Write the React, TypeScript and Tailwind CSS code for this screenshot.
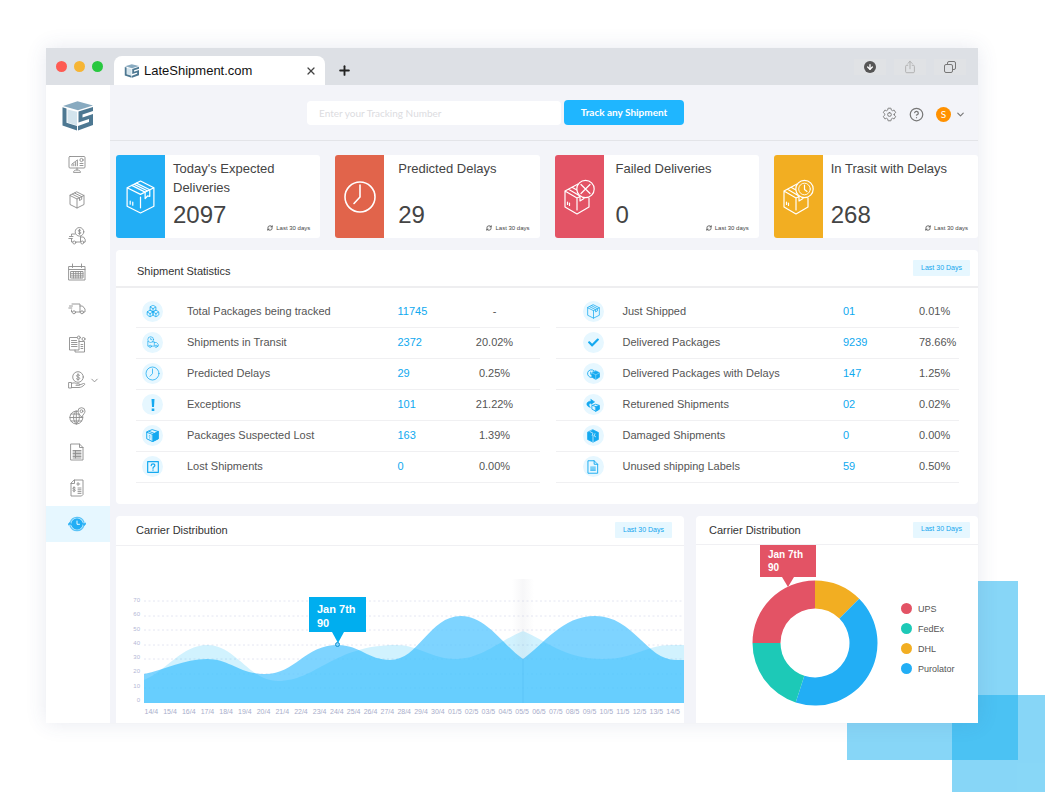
import React from "react";
import { ArrowDown, Boxes, ChevronDown, Plus, RefreshCw, X } from "lucide-react";
import { FaCheck } from "react-icons/fa";
import { FiHelpCircle } from "react-icons/fi";
import { IoSettingsOutline, IoShareOutline } from "react-icons/io5";

type IconProps = { children: React.ReactNode; className?: string };

/* Thin line icon on an 18px grid */
function LineIcon({ children, className = "size-[18px]" }: IconProps) {
  return (
    <svg
      viewBox="0 0 18 18"
      className={className}
      fill="none"
      stroke="currentColor"
      strokeWidth="0.9"
      strokeLinecap="round"
      strokeLinejoin="round"
      aria-hidden="true"
    >
      {children}
    </svg>
  );
}

function Logo({ className }: { className: string }) {
  return (
    <svg viewBox="0 0 32 30" className={className} aria-hidden="true">
      <path d="M1 5 15.500 .3 31 4.500 16 9.300Z" fill="#88aac0" />
      <path d="M5.500 8.500 15 10.800V24.500L5.500 21.500Z" fill="#d3e4ed" />
      <path d="M.5 6.300 4.500 7.500V21.800L15 25V29.600L.5 24.500Z" fill="#4d7892" />
      <path
        d="M31 6V10L20.500 13.500V16.500L31 13V24L16 29.600V25L27 21V18L16.500 21.500V10.600Z"
        fill="#4d7892"
      />
    </svg>
  );
}

const truck = (
  <>
    <path d="M4 5h8v8H7.500M4 13H3.500V11M12 7h2.500l2.500 3v3h-1.300M12.300 13H12M1.500 7h3M.8 9h3" />
    <circle cx="6" cy="13.300" r="1.500" />
    <circle cx="14" cy="13.300" r="1.500" />
  </>
);

const moneyTruck = (
  <>
    <circle cx="11.500" cy="4.800" r="4.300" />
    <path d="M12.800 3.400c-.6-.7-2.500-.6-2.500.4 0 1.200 2.600.8 2.600 2.100 0 1-2 1.200-2.700.3M11.500 2.200v5.200" />
    <path d="M7 7H3.500v1.500M3.500 12v3h1.200M8 15h4.500V9.500M13 10h2.500l1.700 2.500V15h-1M1.500 9.500h3.500M.8 11.500h3.500" />
    <circle cx="6.300" cy="15.500" r="1.500" />
    <circle cx="14.300" cy="15.500" r="1.500" />
  </>
);

const searchTruck = (
  <>
    <circle cx="6.500" cy="5" r="4" />
    <path d="M6.500 3v2h1.500M2.500 7.500V14H4M7.500 14h4V8H9M11.500 9h3l2.500 2.500V14h-1" />
    <circle cx="5.800" cy="14.300" r="1.600" />
    <circle cx="14" cy="14.300" r="1.600" />
  </>
);

const box = (
  <>
    <path d="M9 1 16 4.500V13.500L9 17 2 13.500V4.500ZM2 4.500 9 8 16 4.500M9 8V17" />
    <path d="M4.500 3.300 11.500 6.800V9.500L13.700 8.300V5.600L6.700 2.100" />
  </>
);

const clock = (
  <>
    <circle cx="9" cy="9" r="7.800" />
    <path d="M9 3.500V9L6 12.300" />
  </>
);

const navItems = [
  {
    label: "Dashboard",
    icon: (
      <>
        <rect x="1" y="1.500" width="16" height="11.500" rx="1" />
        <path d="M4 10.800V9.500M5.800 10.800V9M7.600 10.800V7.500M9.400 10.800V5.500M4 9 9.400 5M12 8.500h3M12 10.500h3M9 13v2M5.500 17c0-1.300 1.600-2 3.500-2s3.500.7 3.500 2z" />
        <circle cx="13.500" cy="5" r="1.600" />
      </>
    ),
  },
  { label: "Packages", icon: box },
  { label: "Refunds", icon: moneyTruck },
  {
    label: "Calendar",
    icon: (
      <>
        <path d="M1 3.500h16v13.500H1zM1 6.500h16M4.500 1v3.500M13.500 1v3.500" />
        <path d="M3 8.500h12v6.500H3zM3 10.700h12M3 12.900h12M5.400 8.500v6.500M7.800 8.500v6.500M10.200 8.500v6.500M12.600 8.500v6.500" />
      </>
    ),
  },
  { label: "Carriers", icon: truck },
  {
    label: "Contracts",
    icon: (
      <>
        <path d="M9 2.500H1.500v12.500H11V5M11 6.500h5.500V17H7v-2M3.500 5.500h5M3.500 7.500h5.500M3.500 9.500h5.500M3.500 11.500h5.500M13 9.500h1.800M13 11.500h1.800M13 13.500h1.800" />
        <circle cx="10.800" cy="2.500" r="1.500" />
        <circle cx="15.500" cy="4" r="1.500" />
      </>
    ),
  },
  {
    label: "Payments",
    expandable: true,
    icon: (
      <>
        <circle cx="10" cy="6" r="5.300" />
        <path d="M11.700 4.300c-.8-.9-3.200-.7-3.200.6 0 1.500 3.300.9 3.300 2.500 0 1.300-2.600 1.500-3.500.3M10 2.700v6.600" />
        <path d="M1 11.500h2.500v5.500H1zM3.500 12.500c2-1 3.500-.8 5 .3h2.500c1 0 1 1.500 0 1.500H8M11.500 14l4-1.500c1-.4 1.800.6.9 1.300C14.500 15.500 13 16.500 11 16.500H3.500" />
      </>
    ),
  },
  {
    label: "Tracking",
    icon: (
      <>
        <path d="M10 4.200A6.500 6.500 0 1 0 14.800 9.500" />
        <path d="M8.300 4C4.500 7 4.500 13.500 8.300 17M8.300 17C12 14 12 9 10.500 7M8.300 4V17M1.800 10.500h13M3 7h8M3 14h10.700" />
        <path d="M13.500 10C11 7 10 5.500 10 4.200a3.500 3.500 0 0 1 7 0C17 5.500 16 7 13.500 10z" />
        <circle cx="13.500" cy="4.200" r="1.400" />
      </>
    ),
  },
  {
    label: "Reports",
    icon: (
      <>
        <path d="M3 1h8.500L15 4.500V17H3zM11.500 1v3.500H15" />
        <path d="M5 7.500h8M5 9h8M5 10.500h8M5 12h8M5 13.500h8M5 15h8M7.500 7.500V15" />
      </>
    ),
  },
  {
    label: "Invoices",
    icon: (
      <>
        <path d="M6.500 1H15v14.500l-1.500 1.500H3V4.500zM6.500 1v3.500H3M10 3.500v3M8.800 5h3" />
        <path d="M7.300 8.800c-.7-.7-2.500-.5-2.500.5 0 1.200 2.600.7 2.600 2 0 1-2 1.200-2.700.3M6 7.800v5M10 9h3M10 10.800h3M10 12.600h3M10 14.400h3" />
      </>
    ),
  },
  {
    label: "Delivery times",
    active: true,
    icon: (
      <>
        <circle cx="9" cy="9" r="5.800" fill="#22aef5" stroke="none" />
        <path d="M9 6v3.300h2.500" stroke="#fff" />
        <path
          d="M2.200 7.500A7.200 7.200 0 0 1 15.800 7M2.200 11A7.200 7.200 0 0 0 15.800 10.500"
          strokeWidth="1.300"
          stroke="#5cc4f7"
        />
        <path d="M0 9.500 1.800 7.500 3.600 9.500ZM14.400 8.500 16.200 10.500 18 8.500Z" fill="#22aef5" />
      </>
    ),
  },
];

function Sidebar() {
  return (
    <nav className="w-16 shrink-0 bg-white">
      <div className="flex h-[61px] items-center justify-center">
        <Logo className="h-[30px] w-8" />
      </div>
      <ul>
        {navItems.map((item) => (
          <li key={item.label} className={item.active ? "bg-[#e6f7ff]" : ""}>
            <a
              href="#"
              aria-label={item.label}
              className={`grid h-9 grid-cols-[1fr_18px_1fr] items-center pr-[3px] ${
                item.active ? "text-[#22aef5]" : "text-[#8c8c8c]"
              }`}
            >
              <span />
              <LineIcon>{item.icon}</LineIcon>
              {item.expandable && <ChevronDown size={11} strokeWidth={2} className="ml-[3px]" />}
            </a>
          </li>
        ))}
      </ul>
    </nav>
  );
}

function BrowserBar() {
  return (
    <div className="flex h-[37px] items-end bg-[#dde0e5]">
      <div className="flex gap-[7px] self-center pl-[10px]">
        <span className="size-[11px] rounded-full bg-[#fe5b53]" />
        <span className="size-[11px] rounded-full bg-[#f6b535]" />
        <span className="size-[11px] rounded-full bg-[#28c840]" />
      </div>
      <div className="ml-[11px] flex h-[29px] w-[211px] items-center rounded-t-lg bg-white pl-[10px] pr-2">
        <Logo className="h-[14px] w-4" />
        <span className="ml-1 text-[13px] text-[#111]">LateShipment.com</span>
        <button aria-label="Close tab" className="ml-auto text-[#444]">
          <X size={12} strokeWidth={2.500} />
        </button>
      </div>
      <button aria-label="New tab" className="ml-3 self-center pt-2 text-[#222]">
        <Plus size={15} strokeWidth={3} />
      </button>
      <div className="ml-auto flex gap-2 self-center pr-3">
        <button aria-label="Downloads" className="flex h-4 w-8 items-center justify-center bg-[#e0e2e5]">
          <span className="flex size-3 items-center justify-center rounded-full bg-[#555] text-white">
            <ArrowDown size={8} strokeWidth={4} />
          </span>
        </button>
        <button aria-label="Share" className="flex h-4 w-8 items-center justify-center bg-[#e0e2e5] text-[#aaa]">
          <IoShareOutline size={14} />
        </button>
        <button aria-label="Show all tabs" className="flex h-4 w-8 items-center justify-center bg-[#e0e2e5] text-[#777]">
          <svg viewBox="0 0 12 12" className="size-3" fill="none" stroke="currentColor">
            <rect x="0.500" y="3.500" width="8" height="8" rx="1.500" />
            <path d="M3.500 3.500V2a1.500 1.500 0 0 1 1.500-1.500h5A1.500 1.500 0 0 1 11.500 2v5A1.500 1.500 0 0 1 10 8.500H8.500" />
          </svg>
        </button>
      </div>
    </div>
  );
}

function Header() {
  return (
    <header className="flex h-14 items-center justify-between border-b border-[#e3e4e8] pl-[197px] pr-3 font-[Lato,sans-serif]">
      <form className="flex items-center gap-[3px]">
        <input
          type="text"
          aria-label="Tracking number"
          placeholder="Enter your Tracking Number"
          className="h-6 w-[254px] rounded-sm bg-white px-3 text-[10px] text-gray-700 outline-none placeholder:text-[#dcdcdf]"
        />
        <button type="button" className="h-[25px] w-[120px] rounded-sm bg-[#1fb6ff] text-[10px] font-bold text-white">
          Track any Shipment
        </button>
      </form>
      <div className="flex items-center pt-1 text-[#777]">
        <button aria-label="Settings">
          <IoSettingsOutline size={15} />
        </button>
        <button aria-label="Help" className="ml-3">
          <FiHelpCircle size={15} />
        </button>
        <button aria-label="Account" className="ml-3 flex items-center gap-1">
          <span className="flex size-[15px] items-center justify-center rounded-full bg-[#ff9100] text-[10px] text-white">
            S
          </span>
          <ChevronDown size={11} strokeWidth={2.500} />
        </button>
      </div>
    </header>
  );
}

/* Package with a round badge over its top right corner */
function BadgedBox({ children, fill }: { children: React.ReactNode; fill: string }) {
  return (
    <svg
      viewBox="0 0 31 36"
      className="h-9 w-[31px]"
      fill="none"
      stroke="currentColor"
      strokeWidth="1.200"
      strokeLinecap="round"
      strokeLinejoin="round"
    >
      <path d="M13 19 1 12V28L13 35 25 28V19M13 19V31M13 19 25 13M1 12 14 5M4.500 10.200 16 17M8 8.200 20 15M16 17V22L20 19.500" />
      <path d="M3.500 23v2.500M5.500 24v2.500" />
      <circle cx="21.500" cy="10" r="8.700" fill={fill} />
      {children}
    </svg>
  );
}

const summaryCards = [
  {
    title: "Today's Expected Deliveries",
    value: "2097",
    color: "bg-[#22aef5]",
    pad: "pl-2",
    icon: (
      <svg
        viewBox="0 0 28 33"
        className="h-[34px] w-[29px]"
        fill="none"
        stroke="currentColor"
        strokeWidth="1.200"
        strokeLinejoin="round"
        strokeLinecap="round"
      >
        <path d="M14 1 27 7.500V25.500L14 32 1 25.500V7.500ZM1 7.500 14 14 27 7.500M14 16.500V27" />
        <path d="M5.500 5.200 18.500 11.800V18L20.800 15.500 23 16V9.500L10 3M8 4.200 20.500 10.500M4 20.500v3M6.500 21.500v3" />
      </svg>
    ),
  },
  {
    title: "Predicted Delays",
    value: "29",
    color: "bg-[#e1644b]",
    pad: "pl-[14px]",
    icon: (
      <svg viewBox="0 0 32 32" className="size-8" fill="none" stroke="currentColor" strokeWidth="1.600" strokeLinecap="round">
        <circle cx="16" cy="16" r="15" />
        <path d="M16 4V16L10 22.500" />
      </svg>
    ),
  },
  {
    title: "Failed Deliveries",
    value: "0",
    color: "bg-[#e35365]",
    pad: "pl-3",
    icon: (
      <BadgedBox fill="#e35365">
        <path d="M17 5.500 26 14.500M26 5.500 17 14.500" />
      </BadgedBox>
    ),
  },
  {
    title: "In Trasit with Delays",
    value: "268",
    color: "bg-[#f2ae22]",
    pad: "pl-2",
    icon: (
      <BadgedBox fill="#f2ae22">
        <circle cx="21.500" cy="10" r="5.800" strokeWidth="0.900" />
        <path d="M21.500 6V10.500L24 12.500" />
      </BadgedBox>
    ),
  },
];

function SummaryCards() {
  return (
    <section className="grid grid-cols-4 gap-[15px]">
      {summaryCards.map((card) => (
        <article key={card.title} className="flex overflow-hidden rounded-[3px] bg-white text-[#444]">
          <div className={`flex w-[49px] shrink-0 items-center justify-center text-white ${card.color}`}>
            {card.icon}
          </div>
          <div className={`flex-1 pb-[5px] pr-[10px] pt-1 ${card.pad}`}>
            <h2 className="h-[38px] text-[13px] leading-[19px]">{card.title}</h2>
            <div className="flex items-end justify-between">
              <p className="text-2xl leading-9">{card.value}</p>
              <p className="flex items-center gap-[3px] text-[6px] leading-[10px]">
                <RefreshCw size={6} strokeWidth={3} />
                Last 30 days
              </p>
            </div>
          </div>
        </article>
      ))}
    </section>
  );
}

function PeriodButton() {
  return (
    <button className="h-4 w-[57px] rounded-[1px] bg-[#e6f7ff] text-[7px] text-[#13a5ee]">Last 30 Days</button>
  );
}

const leftStats = [
  { label: "Total Packages being tracked", count: "11745", share: "-", icon: <Boxes size={14} strokeWidth={1.300} /> },
  { label: "Shipments in Transit", count: "2372", share: "20.02%", icon: <LineIcon className="size-[13px]">{searchTruck}</LineIcon> },
  { label: "Predicted Delays", count: "29", share: "0.25%", icon: <LineIcon className="size-[15px]">{clock}</LineIcon> },
  {
    label: "Exceptions",
    count: "101",
    share: "21.22%",
    icon: (
      <svg viewBox="0 0 4 12" className="h-3 w-1" fill="currentColor">
        <path d="M.5 0h3L3 8H1zM.7 9.500h2.600V12H.7z" />
      </svg>
    ),
  },
  {
    label: "Packages Suspected Lost",
    count: "163",
    share: "1.39%",
    icon: (
      <LineIcon className="size-[13px]">
        <path d="M9 1 17 3.500V13.500L9 17.500 1 13.500V4.500ZM1 4.500 9 7.500 17 3.500M4 3.200 12 6.300" strokeWidth="1.300" />
        <path d="M9 7.500 17 3.500V13.500L9 17.500Z" fill="currentColor" />
        <path d="M4 9.500c1-1.500 2.500-.2 1.300 1.200V12M5.200 13.500v.3" />
      </LineIcon>
    ),
  },
  {
    label: "Lost Shipments",
    count: "0",
    share: "0.00%",
    icon: (
      <LineIcon className="size-[12px]">
        <rect x="1" y="1" width="16" height="16" strokeWidth="1.800" />
        <path d="M6.300 6.800C6.500 3.500 11.800 3.600 11.700 6.800 11.600 8.800 9 8.800 9 11M9 13.500v.3" strokeWidth="1.900" />
      </LineIcon>
    ),
  },
];

const rightStats = [
  { label: "Just Shipped", count: "01", share: "0.01%", icon: <LineIcon className="size-[15px]">{box}</LineIcon> },
  { label: "Delivered Packages", count: "9239", share: "78.66%", icon: <FaCheck size={11} /> },
  {
    label: "Delivered Packages with Delays",
    count: "147",
    share: "1.25%",
    icon: (
      <LineIcon className="size-[14px]">
        <path d="M7 13.500A5 5 0 1 1 10 4.500M6 6.500v3h1.500" strokeWidth="1.100" />
        <path d="M12.500 5 17.500 7.500V13L12.500 16 7.500 13V7.500Z" fill="currentColor" />
        <path d="M7.500 7.500 12.500 10 17.500 7.500M12.500 10v6" stroke="#e6f7ff" strokeWidth="0.500" />
      </LineIcon>
    ),
  },
  {
    label: "Returened Shipments",
    count: "02",
    share: "0.02%",
    icon: (
      <LineIcon className="size-[14px]">
        <path d="M6.500 2 11 5 6.500 8V6.300C3.500 6.800 3 9.500 5.500 12-.5 10.500-.5 4.500 6.500 3.800Z" fill="currentColor" />
        <path d="M8 9.500 12.500 8 17 9.500V14.500L12.500 17 8 14.500ZM8 9.500 12.500 11" strokeWidth="1.100" />
        <path d="M12.500 11 17 9.500V14.500L12.500 17Z" fill="currentColor" />
      </LineIcon>
    ),
  },
  {
    label: "Damaged Shipments",
    count: "0",
    share: "0.00%",
    icon: (
      <LineIcon className="size-[14px]">
        <path d="M9 1 16 4.500V13.500L9 17 2 13.500V4.500Z" fill="currentColor" />
        <path d="M9 8v8.500M5.500 3.500 9 5.500 8 8M11.500 6 10.500 9 12.500 10" stroke="#e6f7ff" />
      </LineIcon>
    ),
  },
  {
    label: "Unused shipping Labels",
    count: "59",
    share: "0.50%",
    icon: (
      <LineIcon className="size-[14px]">
        <path d="M3 1h7.500L15 5.500V17H3zM10.500 1v4.500H15" strokeWidth="1.200" />
        <path d="M6 9h6M6 10.500h6M6 12h6M6 13.500h6" />
      </LineIcon>
    ),
  },
];

type StatsTableProps = {
  rows: typeof leftStats;
  iconCell: string;
  countCell: string;
  shareCell: string;
};

function StatsTable({ rows, iconCell, countCell, shareCell }: StatsTableProps) {
  return (
    <table className="w-full table-fixed text-left text-[11px] leading-[15px] text-[#555]">
      <tbody>
        {rows.map((row) => (
          <tr key={row.label} className="h-[31px] border-b border-[#f0f0f2]">
            <td className={iconCell}>
              <span className="flex size-[21px] items-center justify-center rounded-full bg-[#e6f7ff] text-[#14a9f0]">
                {row.icon}
              </span>
            </td>
            <th scope="row" className="whitespace-nowrap font-normal">
              {row.label}
            </th>
            <td className={`text-[#0fa9ef] ${countCell}`}>{row.count}</td>
            <td className={shareCell}>{row.share}</td>
          </tr>
        ))}
      </tbody>
    </table>
  );
}

function ShipmentStatistics() {
  return (
    <section className="rounded-sm bg-white">
      <div className="flex h-[38px] items-center justify-between border-b-2 border-[#eeeef0] pl-[21px] pr-2">
        <h2 className="pt-[6px] text-[11px] text-[#333]">Shipment Statistics</h2>
        <PeriodButton />
      </div>
      <div className="grid grid-cols-2 gap-4 pb-[21px] pl-5 pr-[19px] pt-2">
        <StatsTable
          rows={leftStats}
          iconCell="w-[51px] pl-[6px]"
          countCell="w-16"
          shareCell="w-[78px] pr-3 text-center"
        />
        <StatsTable rows={rightStats} iconCell="w-[67px] pl-[27px]" countCell="w-[76px]" shareCell="w-10" />
      </div>
    </section>
  );
}

const aprilDays = ["14/4", "15/4", "16/4", "17/4", "18/4", "19/4", "20/4", "21/4", "22/4", "23/4"];
const laterDays = [
  "24/4", "25/4", "26/4", "27/4", "28/4", "29/4", "30/4", "01/5", "02/5", "03/5", "04/5",
  "05/5", "06/5", "07/5", "08/5", "09/5", "10/5", "11/5", "12/5", "13/5", "14/5",
];
const gridLines = [22, 37, 51, 66, 80, 95, 109];

function CarrierTrend() {
  return (
    <section className="min-w-0 flex-1 rounded-t-sm bg-white">
      <div className="flex h-[30px] items-center justify-between border-b border-[#f0f0f3] pl-5 pr-3">
        <h2 className="text-[11px] text-[#333]">Carrier Distribution</h2>
        <PeriodButton />
      </div>
      <div className="relative mt-[33px] flex">
        <div className="flex w-7 flex-col items-end pr-1 pt-[15px] text-[6px] text-[#b4b8d6]">
          {[70, 60, 50, 40, 30, 20, 10, 0].map((tick) => (
            <span key={tick} className="flex flex-1 items-center">
              {tick}
            </span>
          ))}
        </div>
        <svg viewBox="0 0 540 124" preserveAspectRatio="none" className="mb-[5px] h-[124px] min-w-0 flex-1">
          <defs>
            <linearGradient id="marker">
              <stop offset="0" stopColor="#99a" stopOpacity="0" />
              <stop offset="0.500" stopColor="#99a" stopOpacity="0.080" />
              <stop offset="1" stopColor="#99a" stopOpacity="0" />
            </linearGradient>
          </defs>
          {gridLines.map((y) => (
            <line key={y} x1="0" x2="540" y1={y} y2={y} stroke="#e4e6f2" strokeDasharray="2 2.500" />
          ))}
          <path
            d="M0 95C20 91 40 80 63 80S95 95 121 95C152 95 160 66 194 66C215 66 225 81 246 81C275 81 285 37 317 37C342 37 358 65 379 80C400 65 418 37 451 37C490 37 502 81 532 81H540V124H0Z"
            fill="#56c7ff"
            fillOpacity="0.760"
          />
          <path
            d="M0 101C22 92 38 66 63 66C92 66 105 102 134 102C172 102 190 66 252 66C275 66 287 80 312 80C338 80 355 62 379 52C403 62 420 80 459 80C492 80 500 66 528 66H540V124H0Z"
            fill="#00b8f8"
            fillOpacity="0.180"
          />
          <rect x="368" y="0" width="22" height="80" fill="url(#marker)" />
          <line x1="379" x2="379" y1="80" y2="124" stroke="#4fbdf5" strokeOpacity="0.500" />
          <circle cx="193.500" cy="65.500" r="2" fill="#7fd4ff" stroke="#1390d0" />
        </svg>
        <div className="absolute left-[193px] top-[18px] w-[57px] text-[11px] font-bold leading-[14px] text-white">
          <div className="bg-[#00aeef] px-2 pb-[2px] pt-[5px]">
            Jan 7th
            <br />
            90
          </div>
          <svg viewBox="0 0 12 11" className="mx-auto h-[11px] w-3" fill="#00aeef">
            <path d="M0 0H12L6 11Z" />
          </svg>
        </div>
      </div>
      <div className="flex pb-[7px] pl-[26px] pr-1 text-center text-[7px] leading-[8px] text-[#a9aecb]">
        <div className="grid w-[187px] grid-cols-10">
          {aprilDays.map((day) => (
            <span key={day}>{day}</span>
          ))}
        </div>
        <div className="flex flex-1 justify-between pl-[1px]">
          {laterDays.map((day) => (
            <span key={day}>{day}</span>
          ))}
        </div>
      </div>
    </section>
  );
}

const carriers = [
  { name: "UPS", dot: "bg-[#e35365]" },
  { name: "FedEx", dot: "bg-[#1dc9b7]" },
  { name: "DHL", dot: "bg-[#f2ae22]" },
  { name: "Purolator", dot: "bg-[#22aef5]" },
];

const slices = [
  { color: "#f2ae22", from: 0, to: 45 },
  { color: "#22aef5", from: 45, to: 198 },
  { color: "#1dc9b7", from: 198, to: 270 },
  { color: "#e35365", from: 270, to: 360 },
];

function slicePath(from: number, to: number) {
  const at = (deg: number, r: number) => {
    const a = (deg * Math.PI) / 180;
    return `${63 + r * Math.sin(a)} ${63 - r * Math.cos(a)}`;
  };
  return `M${at(from, 62.5)}A62.5 62.5 0 0 1 ${at(to, 62.5)}L${at(to, 34.5)}A34.5 34.5 0 0 0 ${at(from, 34.5)}Z`;
}

function CarrierShare() {
  return (
    <section className="w-[282px] shrink-0 rounded-t-sm bg-white">
      <div className="flex h-[29px] items-center justify-between border-b border-[#f0f0f3] pl-[13px] pr-2">
        <h2 className="pt-[2px] text-[11px] text-[#333]">Carrier Distribution</h2>
        <PeriodButton />
      </div>
      <div className="relative flex pl-14 pt-[35px]">
        <svg viewBox="0 0 126 126" className="size-[126px]">
          {slices.map((slice) => (
            <path key={slice.color} d={slicePath(slice.from, slice.to)} fill={slice.color} />
          ))}
        </svg>
        <div className="absolute left-16 top-0 w-14 text-[10px] font-bold leading-[13px] text-white">
          <div className="bg-[#e35365] px-2 pb-[3px] pt-[3px]">
            Jan 7th
            <br />
            90
          </div>
          <svg viewBox="0 0 12 10" className="mx-auto h-[10px] w-3" fill="#e35365">
            <path d="M0 0H12L6 10Z" />
          </svg>
        </div>
        <ul className="ml-[23px] pt-[19px] text-[9px] leading-5 text-[#555]">
          {carriers.map((carrier) => (
            <li key={carrier.name} className="flex items-center gap-[6px]">
              <span className={`size-[11px] rounded-full ${carrier.dot}`} />
              {carrier.name}
            </li>
          ))}
        </ul>
      </div>
    </section>
  );
}

export default function App() {
  return (
    <div className="relative min-h-screen overflow-hidden bg-white pb-[69px] pl-[46px] pr-[67px] pt-12 font-['Liberation_Sans',Arial,sans-serif]">
      {/* Accent squares behind the window */}
      <div className="absolute bottom-8 right-[27px] h-[179px] w-[171px] bg-[#10aeef]/50" />
      <div className="absolute bottom-0 right-0 h-[97px] w-[93px] bg-[#10aeef]/50" />

      <div className="relative bg-[#f3f4f9] shadow-[0_0_20px_rgba(60,70,130,0.12)]">
        <BrowserBar />
        <div className="flex">
          <Sidebar />
          <div className="min-w-0 flex-1">
            <Header />
            <main className="flex flex-col gap-3 pl-[6px] pt-[14px]">
              <SummaryCards />
              <ShipmentStatistics />
              <div className="flex gap-3">
                <CarrierTrend />
                <CarrierShare />
              </div>
            </main>
          </div>
        </div>
      </div>
    </div>
  );
}
